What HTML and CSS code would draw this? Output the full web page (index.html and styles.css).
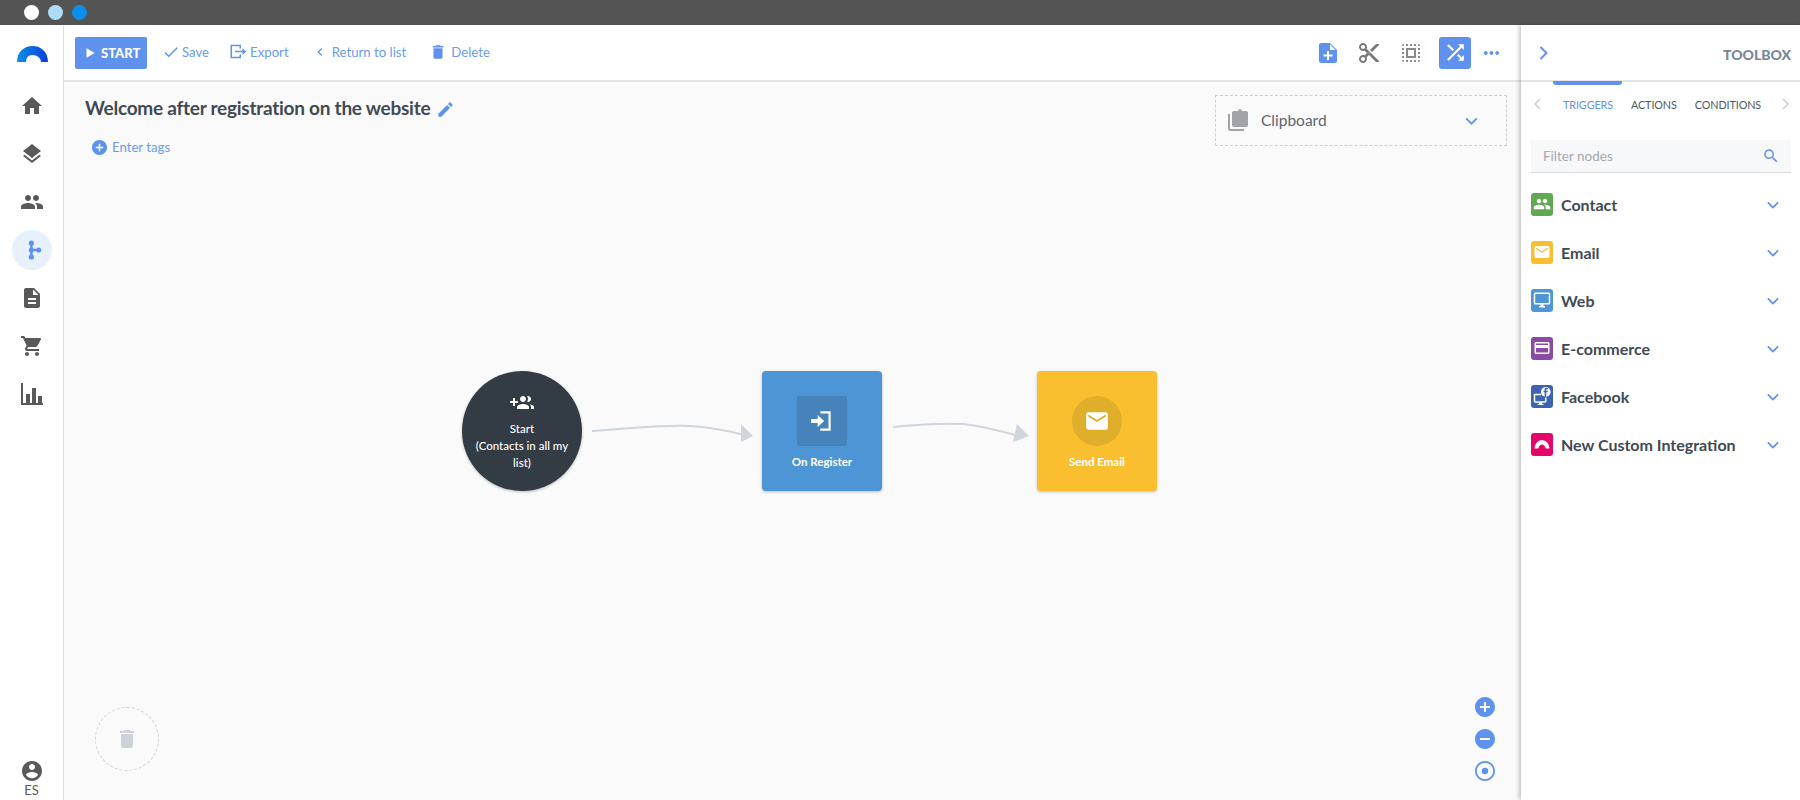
FILE: index.html
```html
<!DOCTYPE html>
<html lang="en">
<head>
<meta charset="utf-8">
<title>Workflow editor</title>
<link rel="stylesheet" href="styles.css">
</head>
<body>
<div class="chrome"><span class="dot dot-white"></span><span class="dot dot-light"></span><span class="dot dot-blue"></span></div>
<div class="app">
  <nav class="sidebar">
    <svg class="logo" viewBox="0 0 31 16"><defs><linearGradient id="lg" x1="0" x2="1" y1="0" y2="0"><stop offset="0" stop-color="#0a8fe8"/><stop offset="1" stop-color="#0a3fd6"/></linearGradient></defs><path d="M0 16C0 6 7 0 15.500 0S31 6 31 16H24C24 12 20 9 15.500 9S9 12 9 16Z" fill="url(#lg)"/></svg>
    <a class="nav-item"><svg viewBox="0 0 24 24"><path d="M10 20v-6h4v6h5v-8h3L12 3 2 12h3v8z"/></svg></a>
    <a class="nav-item"><svg viewBox="0 0 24 24"><path d="M11.990 18.540l-7.370-5.730L3 14.070l9 7 9-7-1.630-1.270-7.380 5.740zM12 16l7.360-5.730L21 9l-9-7-9 7 1.630 1.270L12 16z"/></svg></a>
    <a class="nav-item"><svg viewBox="0 0 24 24"><path d="M16 11c1.660 0 2.990-1.340 2.990-3S17.660 5 16 5c-1.660 0-3 1.340-3 3s1.340 3 3 3zm-8 0c1.660 0 2.990-1.340 2.990-3S9.660 5 8 5C6.340 5 5 6.340 5 8s1.340 3 3 3zm0 2c-2.330 0-7 1.170-7 3.500V19h14v-2.500c0-2.330-4.670-3.500-7-3.500zm8 0c-.29 0-.62.020-.97.050 1.160.840 1.970 1.970 1.970 3.450V19h6v-2.500c0-2.330-4.670-3.500-7-3.500z"/></svg></a>
    <a class="nav-item nav-active"><svg viewBox="0 0 24 24"><path d="M10 5h2.600v14H10z"/><path d="M11 10.700h9v2.600h-9z"/><circle cx="11.300" cy="4.500" r="2.800"/><circle cx="11.300" cy="12" r="2.800"/><circle cx="11.300" cy="19.500" r="2.800"/><circle cx="19.300" cy="12" r="2.800"/></svg></a>
    <a class="nav-item"><svg viewBox="0 0 24 24"><path d="M14 2H6c-1.100 0-1.990.9-1.990 2L4 20c0 1.100.89 2 1.990 2H18c1.100 0 2-.9 2-2V8l-6-6zm2 16H8v-2h8v2zm0-4H8v-2h8v2zm-3-5V3.500L18.500 9H13z"/></svg></a>
    <a class="nav-item"><svg viewBox="0 0 24 24"><path d="M7 18c-1.100 0-1.990.9-1.990 2S5.900 22 7 22s2-.9 2-2-.9-2-2-2zM1 2v2h2l3.600 7.590-1.350 2.450c-.16.28-.25.61-.25.96 0 1.100.9 2 2 2h12v-2H7.420c-.14 0-.25-.11-.25-.25l.03-.12.9-1.630h7.450c.75 0 1.410-.41 1.750-1.030l3.580-6.490c.08-.14.12-.31.12-.48 0-.55-.45-1-1-1H5.210l-.94-2H1zm16 16c-1.100 0-1.990.9-1.990 2s.89 2 1.990 2 2-.9 2-2-.9-2-2-2z"/></svg></a>
    <a class="nav-item"><svg viewBox="0 0 24 24"><path d="M1 1h2v20h20v2H1z"/><path d="M6 12h4v9H6zM12 6h4v15h-4zM18 14h4v7h-4z"/></svg></a>
    <div class="profile">
      <svg viewBox="0 0 24 24"><path d="M12 2C6.480 2 2 6.480 2 12s4.480 10 10 10 10-4.480 10-10S17.520 2 12 2zm0 3c1.660 0 3 1.340 3 3s-1.340 3-3 3-3-1.340-3-3 1.340-3 3-3zm0 14.200c-2.500 0-4.710-1.280-6-3.220.03-1.990 4-3.080 6-3.080 1.990 0 5.970 1.090 6 3.080-1.290 1.940-3.500 3.220-6 3.220z"/></svg>
      <span>ES</span>
    </div>
  </nav>

  <main class="main">
    <header class="toolbar">
      <button class="btn-start"><svg viewBox="0 0 24 24"><path d="M6 4l14 8-14 8z"/></svg>START</button>
      <a class="tool tool-save"><svg viewBox="0 0 24 24"><path d="M9 16.170L4.830 12l-1.420 1.410L9 19 21 7l-1.410-1.410z"/></svg>Save</a>
      <a class="tool tool-export"><svg class="wide" viewBox="0 0 24 20"><path d="M2 1h14v5h-2V3H4v14h10v-3h2v5H2z"/><path d="M8 9h10V5.500l5 4.500-5 4.500V11H8z"/></svg>Export</a>
      <a class="tool tool-return"><svg class="small" viewBox="0 0 24 24"><path d="M15.410 7.410L14 6l-6 6 6 6 1.410-1.410L10.830 12z"/></svg>Return to list</a>
      <a class="tool tool-delete"><svg viewBox="0 0 24 24"><path d="M6 19c0 1.100.9 2 2 2h8c1.100 0 2-.9 2-2V7H6v12zM19 4h-3.500l-1-1h-5l-1 1H5v2h14V4z"/></svg>Delete</a>
      <div class="tool-right">
        <svg class="ti ti-blue" viewBox="3 2 18 20"><path d="M3 4c0-1.100.9-2 2-2h9l7 7v11c0 1.100-.9 2-2 2H5c-1.100 0-2-.9-2-2z"/><path class="plus" d="M11 10h2v3.500h3.500v2H13V19h-2v-3.500H7.500v-2H11z"/><path class="plus" d="M14 3.500V9h5.500z"/></svg>
        <svg class="ti ti-grey" viewBox="0 0 24 24"><path d="M9.640 7.640c.23-.5.36-1.050.36-1.640 0-2.210-1.790-4-4-4S2 3.790 2 6s1.790 4 4 4c.59 0 1.140-.13 1.640-.36L10 12l-2.360 2.360C7.140 14.130 6.590 14 6 14c-2.210 0-4 1.790-4 4s1.790 4 4 4 4-1.790 4-4c0-.59-.13-1.140-.36-1.640L12 14l7 7h3v-1L9.640 7.640zM6 8c-1.100 0-2-.89-2-2s.9-2 2-2 2 .89 2 2-.9 2-2 2zm0 12c-1.100 0-2-.89-2-2s.9-2 2-2 2 .89 2 2-.9 2-2 2zm6-7.500c-.28 0-.5-.22-.5-.5s.22-.5.5-.5.5.22.5.5-.22.5-.5.5zM19 3l-6 6 2 2 7-7V3z"/></svg>
        <svg class="ti ti-grey ti-sel" viewBox="0 0 24 24"><path d="M3 5h2V3c-1.100 0-2 .9-2 2zm0 8h2v-2H3v2zm4 8h2v-2H7v2zM3 9h2V7H3v2zm10-6h-2v2h2V3zm6 0v2h2c0-1.100-.9-2-2-2zM5 21v-2H3c0 1.100.9 2 2 2zm-2-4h2v-2H3v2zM9 3H7v2h2V3zm2 18h2v-2h-2v2zm8-8h2v-2h-2v2zm0 8c1.100 0 2-.9 2-2h-2v2zm0-12h2V7h-2v2zm0 8h2v-2h-2v2zm-4 4h2v-2h-2v2zm0-16h2V3h-2v2zM7 17h10V7H7v10zm2-8h6v6H9V9z"/></svg>
        <span class="shuffle"><svg viewBox="0 0 24 24"><path d="M10.590 9.170L5.410 4 4 5.410l5.170 5.170 1.420-1.410zM14.500 4l2.040 2.040L4 18.590 5.410 20 17.960 7.460 20 9.500V4h-5.500zm.33 9.410l-1.410 1.410 3.130 3.130L14.500 20H20v-5.500l-2.040 2.040-3.130-3.130z"/></svg></span>
        <svg class="ti-more" viewBox="3 9 18 6"><path d="M6 10c-1.100 0-2 .9-2 2s.9 2 2 2 2-.9 2-2-.9-2-2-2zm12 0c-1.100 0-2 .9-2 2s.9 2 2 2 2-.9 2-2-.9-2-2-2zm-6 0c-1.100 0-2 .9-2 2s.9 2 2 2 2-.9 2-2-.9-2-2-2z"/></svg>
      </div>
    </header>

    <section class="canvas">
      <div class="head">
        <div class="head-left">
          <h1 class="title">Welcome after registration on the website<svg viewBox="0 0 24 24"><path d="M3 17.250V21h3.750L17.810 9.940l-3.750-3.750L3 17.250zM20.710 7.040c.39-.39.39-1.020 0-1.410l-2.340-2.340c-.39-.39-1.020-.39-1.410 0l-1.830 1.830 3.750 3.750 1.830-1.830z"/></svg></h1>
          <a class="tags"><svg viewBox="2 2 20 20"><path d="M12 2C6.480 2 2 6.480 2 12s4.480 10 10 10 10-4.480 10-10S17.520 2 12 2zm5 11h-4v4h-2v-4H7v-2h4V7h2v4h4v2z"/></svg>Enter tags</a>
        </div>
        <div class="clipboard">
          <svg class="clip-ic" viewBox="0 0 20 22"><path d="M0 5h2v15h14v2H2c-1.100 0-2-.9-2-2z"/><path d="M6 2h4c.3-1.200 1.100-2 2-2s1.700.8 2 2h4c1.100 0 2 .9 2 2v12c0 1.100-.9 2-2 2H6c-1.100 0-2-.9-2-2V4c0-1.100.9-2 2-2z"/></svg>
          <span>Clipboard</span>
          <svg class="clip-chev" viewBox="0 0 14 9"><path d="M1 1.500l6 6 6-6" /></svg>
        </div>
      </div>

      <svg class="edges" viewBox="0 0 1456 718">
        <path class="edge" d="M528 349C570 346 600 343 625 344C645 345 665 349 680 353"/>
        <path class="arrow" d="M689 354L677 342L677 360Z"/>
        <path class="edge" d="M829 345C860 342 880 341 899 342C917 344 937 349 955 354"/>
        <path class="arrow" d="M965 354L953 342L949 360Z"/>
      </svg>

      <div class="node node-start">
        <svg viewBox="0 0 24 24"><path d="M8 10H5V7H3v3H0v2h3v3h2v-3h3v-2zm10 1c1.660 0 2.990-1.340 2.990-3S19.660 5 18 5c-.32 0-.63.050-.91.140.57.810.9 1.790.9 2.860s-.34 2.040-.9 2.860c.28.090.59.140.91.140zm-5 0c1.660 0 2.990-1.340 2.990-3S14.660 5 13 5s-3 1.340-3 3 1.340 3 3 3zm6.620 2.160c.83.730 1.380 1.660 1.380 2.840v2h3v-2c0-1.540-2.370-2.490-4.380-2.840zM13 13c-2 0-6 1-6 3v2h12v-2c0-2-4-3-6-3z"/></svg>
        <span>Start<br>(Contacts in all my list)</span>
      </div>
      <div class="node node-square node-register">
        <div class="node-icon square"><svg viewBox="0 0 24 24"><path d="M10.500 3H20v18h-9.500v-2H18V5h-7.500z" /><path d="M2 10.200h6V6.500l6 5.500-6 5.500v-3.700H2z"/></svg></div>
        <span>On Register</span>
      </div>
      <div class="node node-square node-email">
        <div class="node-icon round"><svg viewBox="0 0 24 24"><path d="M20 4H4c-1.100 0-1.990.9-1.990 2L2 18c0 1.100.9 2 2 2h16c1.100 0 2-.9 2-2V6c0-1.100-.9-2-2-2zm0 4l-8 5-8-5V6l8 5 8-5v2z"/></svg></div>
        <span>Send Email</span>
      </div>

      <div class="trash"><svg viewBox="0 0 24 24"><path d="M6 19c0 1.100.9 2 2 2h8c1.100 0 2-.9 2-2V7H6v12zM19 4h-3.500l-1-1h-5l-1 1H5v2h14V4z"/></svg></div>
      <div class="zoom">
        <svg viewBox="2 2 20 20"><path d="M12 2C6.480 2 2 6.480 2 12s4.480 10 10 10 10-4.480 10-10S17.520 2 12 2zm5 11h-4v4h-2v-4H7v-2h4V7h2v4h4v2z"/></svg>
        <svg viewBox="2 2 20 20"><path d="M12 2C6.480 2 2 6.480 2 12s4.480 10 10 10 10-4.480 10-10S17.520 2 12 2zm5 11H7v-2h10v2z"/></svg>
        <svg viewBox="2 2 20 20"><path d="M12 8.800a3.200 3.200 0 1 0 0 6.400a3.200 3.200 0 0 0 0-6.400zM12 2C6.480 2 2 6.480 2 12s4.480 10 10 10 10-4.480 10-10S17.520 2 12 2zm0 18.200c-4.530 0-8.200-3.670-8.200-8.200S7.470 3.800 12 3.800s8.200 3.670 8.200 8.200-3.670 8.200-8.200 8.200z"/></svg>
      </div>
    </section>
  </main>

  <aside class="panel">
    <div class="panel-head">
      <svg class="panel-chev" viewBox="0 0 9 14"><path d="M1.500 1l6 6-6 6"/></svg>
      <strong>TOOLBOX</strong>
    </div>
    <div class="tabs">
      <span class="tab-mark"></span>
      <svg class="tab-arrow" viewBox="0 0 7 12"><path d="M6 1L1 6l5 5"/></svg>
      <span class="tab tab-on">TRIGGERS</span>
      <span class="tab">ACTIONS</span>
      <span class="tab">CONDITIONS</span>
      <svg class="tab-arrow" viewBox="0 0 7 12"><path d="M1 1l5 5-5 5"/></svg>
    </div>
    <div class="filter">
      <span>Filter nodes</span>
      <svg viewBox="0 0 24 24"><path d="M15.500 14h-.79l-.28-.27C15.410 12.590 16 11.110 16 9.500 16 5.910 13.090 3 9.500 3S3 5.910 3 9.500 5.910 16 9.500 16c1.610 0 3.090-.59 4.230-1.570l.27.28v.79l5 4.990L20.490 19l-4.990-5zm-6 0C7.010 14 5 11.990 5 9.500S7.010 5 9.500 5 14 7.010 14 9.500 11.990 14 9.500 14z"/></svg>
    </div>
    <ul class="groups">
      <li class="group"><span class="gi gi-green"><svg viewBox="0 0 24 24"><path d="M16 11c1.660 0 2.990-1.340 2.990-3S17.660 5 16 5c-1.660 0-3 1.340-3 3s1.340 3 3 3zm-8 0c1.660 0 2.990-1.340 2.990-3S9.660 5 8 5C6.340 5 5 6.340 5 8s1.340 3 3 3zm0 2c-2.330 0-7 1.170-7 3.500V19h14v-2.500c0-2.330-4.670-3.500-7-3.500zm8 0c-.29 0-.62.020-.97.050 1.160.840 1.970 1.970 1.970 3.450V19h6v-2.500c0-2.330-4.670-3.500-7-3.500z"/></svg></span>Contact<svg class="gc" viewBox="0 0 14 9"><path d="M1 1.500l6 6 6-6"/></svg></li>
      <li class="group"><span class="gi gi-yellow"><svg viewBox="0 0 24 24"><path d="M20 4H4c-1.100 0-1.990.9-1.990 2L2 18c0 1.100.9 2 2 2h16c1.100 0 2-.9 2-2V6c0-1.100-.9-2-2-2zm0 4l-8 5-8-5V6l8 5 8-5v2z"/></svg></span>Email<svg class="gc" viewBox="0 0 14 9"><path d="M1 1.500l6 6 6-6"/></svg></li>
      <li class="group"><span class="gi gi-blue"><svg viewBox="0 0 24 24"><path d="M21 2H3c-1.100 0-2 .9-2 2v12c0 1.100.9 2 2 2h7v2H8v2h8v-2h-2v-2h7c1.100 0 2-.9 2-2V4c0-1.100-.9-2-2-2zm0 14H3V4h18v12z"/></svg></span>Web<svg class="gc" viewBox="0 0 14 9"><path d="M1 1.500l6 6 6-6"/></svg></li>
      <li class="group"><span class="gi gi-purple"><svg viewBox="0 0 24 24"><path d="M20 4H4c-1.110 0-1.990.89-1.990 2L2 18c0 1.110.89 2 2 2h16c1.110 0 2-.89 2-2V6c0-1.110-.89-2-2-2zm0 14H4v-6h16v6zm0-10H4V6h16v2z"/></svg></span>E-commerce<svg class="gc" viewBox="0 0 14 9"><path d="M1 1.500l6 6 6-6"/></svg></li>
      <li class="group"><span class="gi gi-fb"><svg viewBox="0 0 24 24"><path d="M1 9h10v2H3v8h13v-5h2v5c0 1-1 2-2 2h-4v1.500h2V24H6v-1.500h2V21H3c-1 0-2-1-2-2z"/><circle cx="17" cy="6.500" r="6.500"/><path class="fb-f" d="M19.800 3h-1.400c-.5 0-.7.300-.7.800v1.200h2l-.3 2h-1.700v6h-2.200V7h-1.300V5h1.300V3.500C15.500 1.900 16.500 1 18 1h1.800z"/></svg></span>Facebook<svg class="gc" viewBox="0 0 14 9"><path d="M1 1.500l6 6 6-6"/></svg></li>
      <li class="group"><span class="gi gi-pink"><svg viewBox="0 0 24 24"><path d="M2 18C3 10 7 7 12 7s9 3 10 11l-5 0C16 14 14 12.500 12 12.500S8 14 7 18Z"/></svg></span>New Custom Integration<svg class="gc" viewBox="0 0 14 9"><path d="M1 1.500l6 6 6-6"/></svg></li>
    </ul>
  </aside>
</div>
</body>
</html>
```

FILE: styles.css
```css
* { box-sizing: border-box; }
html, body { margin: 0; height: 800px; overflow: hidden; }
body { font-family: "Lato", "Liberation Sans", sans-serif; color: #3f4a54; background: #fff; }
ul { margin: 0; padding: 0; list-style: none; }
button { font: inherit; border: 0; }

.chrome { height: 25px; background: #545454; display: flex; align-items: center; gap: 9px; padding-left: 24px; }
.dot { width: 15px; height: 15px; border-radius: 50%; }
.dot-white { background: #fff; }
.dot-light { background: #aedcf8; }
.dot-blue { background: #0a90e8; }

.app { display: grid; grid-template-columns: 64px 1fr 279px; height: 775px; }

.sidebar { position: relative; display: flex; flex-direction: column; align-items: center; border-right: 1px solid #e0e0e0; width: 64px; background: #fff; padding-top: 21px; }
.logo { width: 31px; height: 16px; margin: 0 0 24px 1px; flex: none; }
.nav-item { width: 40px; height: 40px; margin-bottom: 8px; border-radius: 50%; display: flex; align-items: center; justify-content: center; }
.nav-item svg { width: 24px; height: 24px; fill: #595959; }
.nav-active { background: #e6f1fd; }
.nav-active svg { fill: #5f92ee; width: 22px; height: 22px; }
.profile { position: absolute; left: 0; right: 0; bottom: 3px; display: flex; flex-direction: column; align-items: center; font-size: 13px; line-height: 14px; color: #595959; }
.profile svg { width: 24px; height: 24px; fill: #595959; }

.main { display: flex; flex-direction: column; min-width: 0; }
.toolbar { height: 57px; flex: none; border-bottom: 2px solid #e4e4e4; display: flex; align-items: center; padding: 0 0 2px 11px; background: #fff; }
.btn-start { width: 72px; height: 32px; border-radius: 2px; background: #5f92ee; color: #fff; font-weight: 900; font-size: 13px; display: flex; align-items: center; gap: 4px; padding: 0 0 0 8px; margin-top: 2px; }
.btn-start svg { width: 14px; height: 14px; fill: #fff; }
.tool { display: flex; align-items: center; color: #6c9bef; font-size: 13.200px; }
.tool svg { width: 18px; height: 18px; fill: #5f92ee; }
.tool svg.wide { width: 18px; height: 15px; margin-right: 3px; }
.tool svg.small { width: 16px; height: 16px; margin-right: 4px; }
.tool-save { margin-left: 15px; }
.tool-save svg { margin-right: 2px; }
.tool-export { margin-left: 20px; }
.tool-return { margin-left: 23px; }
.tool-delete { margin-left: 23px; }
.tool-delete svg { margin-right: 4px; }
.tool-right { margin-left: auto; display: flex; align-items: center; padding-right: 21px; margin-top: 2px; }
.ti { width: 24px; height: 24px; }
.ti-blue { fill: #5f92ee; width: 18px; height: 20px; margin-right: 20px; }
.plus { fill: #fff; }
.ti-grey { fill: #7a7a7a; margin-right: 18px; }
.ti-sel { margin-right: 16px; fill: #8a8a8a; }
.shuffle { width: 32px; height: 32px; border-radius: 3px; background: #5f92ee; display: flex; align-items: center; justify-content: center; margin-right: 12px; }
.shuffle svg { width: 25px; height: 25px; fill: #fff; }
.ti-more { width: 17px; height: 6px; fill: #5f92ee; }

.canvas { position: relative; flex: 1; background: #fafafa; }
.head { display: flex; justify-content: space-between; align-items: flex-start; padding: 13px 14px 0 21px; }
.title { margin: 0; font-size: 19px; letter-spacing: -.25px; line-height: 26px; font-weight: 700; color: #3f4a54; display: flex; align-items: center; }
.title svg { width: 19px; height: 19px; fill: #5f92ee; margin: 3px 0 0 6px; }
.tags { display: flex; align-items: center; font-size: 13.200px; color: #6c9bef; margin: 18px 0 0 7px; }
.tags svg { width: 15px; height: 15px; fill: #5f92ee; margin-right: 5px; }
.clipboard { width: 292px; height: 51px; border: 1px dashed #cfcfcf; display: flex; align-items: center; padding: 0 28px 2px 12px; font-size: 15.500px; color: #5c6670; }
.clip-ic { width: 20px; height: 22px; fill: #a0a4a8; margin-right: 13px; }
.clipboard span { flex: 1; }
.clip-chev { width: 13px; height: 8px; fill: none; stroke: #5f92ee; stroke-width: 2; margin-top: 2px; }

.edges { position: absolute; left: 0; top: 0; width: 1456px; height: 718px; pointer-events: none; }
.edge { fill: none; stroke: #cfd5dc; stroke-width: 2; }
.arrow { fill: #cfd5dc; }

.node { position: absolute; top: 289px; width: 120px; height: 120px; color: #fff; display: flex; flex-direction: column; align-items: center; text-align: center; box-shadow: 0 1px 3px rgba(0,0,0,.25); font-size: 11.500px; line-height: 17px; font-weight: 500; }
.node-start { left: 398px; border-radius: 50%; background: #333b45; padding: 20px 8px 0; }
.node-start svg { width: 24px; height: 24px; fill: #fff; margin-bottom: 5px; }
.node-square { border-radius: 4px; padding-top: 25px; }
.node-square span { margin-top: 7px; font-weight: 700; }
.node-register { left: 698px; background: #4e95d5; }
.node-email { left: 973px; background: #f9bf2f; }
.node-icon { width: 50px; height: 50px; display: flex; align-items: center; justify-content: center; }
.node-icon svg { width: 26px; height: 26px; fill: #fff; }
.square { background: #4683bb; border-radius: 2px; }
.round { background: #dfae2b; border-radius: 50%; }

.trash { position: absolute; left: 31px; bottom: 29px; width: 64px; height: 64px; border: 1px dashed #cfcfcf; border-radius: 50%; display: flex; align-items: center; justify-content: center; }
.trash svg { width: 24px; height: 24px; fill: #ccd1da; }
.zoom { position: absolute; right: 26px; bottom: 19px; display: flex; flex-direction: column; gap: 12px; }
.zoom svg { display: block; width: 20px; height: 20px; fill: #5f92ee; }

.panel { position: relative; background: #fff; box-shadow: -2px 0 4px rgba(0,0,0,.22); display: flex; flex-direction: column; padding: 0 9px 0 10px; }
.panel-head { height: 57px; flex: none; margin: 0 -9px 0 -10px; padding: 0 9px 0 18px; border-bottom: 2px solid #e4e4e4; display: flex; align-items: center; justify-content: space-between; }
.panel-chev { width: 9px; height: 14px; fill: none; stroke: #5f92ee; stroke-width: 2; }
.panel-head strong { font-size: 14px; color: #75869c; font-weight: 900; margin-top: 3px; }
.tabs { position: relative; display: flex; align-items: center; height: 44px; font-size: 10.800px; letter-spacing: -.1px; color: #4f5963; flex: none; padding: 0 2px 0 3px; }
.tab { margin-right: 18px; }
.tab-on { color: #5f92ee; margin-left: 22px; }
.tab-arrow { width: 7px; height: 12px; fill: none; stroke: #c9cdd2; stroke-width: 1.500; flex: none; }
.tab-arrow:last-child { margin-left: auto; }
.tab-mark { position: absolute; left: 22px; top: -1px; width: 69px; height: 4px; background: #5f92ee; border-radius: 0 0 3px 3px; }
.filter { height: 33px; margin-top: 14px; background: #f6f8fa; border-bottom: 1px solid #d8d8d8; display: flex; align-items: center; justify-content: space-between; padding: 0 11px 0 12px; font-size: 13.500px; color: #a5a9ad; flex: none; }
.filter svg { width: 18px; height: 18px; fill: #5f92ee; }
.groups { margin-top: 7px; }
.group { height: 48px; display: flex; align-items: center; font-size: 16px; font-weight: 700; color: #3f4a54; }
.gi { width: 22px; height: 23px; border-radius: 3px; display: flex; align-items: center; justify-content: center; margin-right: 8px; flex: none; }
.gi svg { width: 18px; height: 18px; fill: #fff; }
.gi svg .fb-f { fill: #3d64b0; }
.gi-green { background: #60a952; }
.gi-yellow { background: #f9bf2f; }
.gi-blue { background: #4e95d5; }
.gi-purple { background: #8b4aa3; }
.gi-fb { background: #3d64b0; }
.gi-pink { background: #e4066b; }
.gc { width: 12px; height: 8px; margin: 2px 12px 0 auto; fill: none; stroke: #5f92ee; stroke-width: 2; }
```
